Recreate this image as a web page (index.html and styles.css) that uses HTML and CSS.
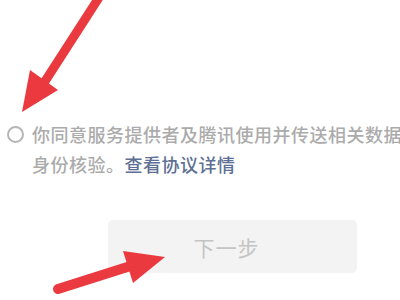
FILE: index.html
```html
<!DOCTYPE html>
<html lang="zh">
<head>
<meta charset="utf-8">
<link rel="stylesheet" href="styles.css">
</head>
<body>
<div class="page">
  <div class="agree">
    <span class="radio"></span>
    <p class="agree-text">你同意服务提供者及腾讯使用并传送相关数据<br>身份核验。<a class="link">查看协议详情</a></p>
  </div>
  <div class="actions">
    <button class="next">下一步</button>
  </div>
  <svg class="arrows" width="400" height="300" viewBox="0 0 400 300">
    <line x1="100" y1="-4" x2="42" y2="86" stroke="#ea3a40" stroke-width="9" stroke-linecap="butt"/>
    <polygon points="22,112 30,70 58,90" fill="#ea3a40"/>
    <line x1="58" y1="289" x2="140" y2="263" stroke="#ea3a40" stroke-width="10" stroke-linecap="round"/>
    <polygon points="165,257 123,251 133,283" fill="#ea3a40"/>
  </svg>
</div>
</body>
</html>
```
FILE: styles.css
```css
html, body {
  margin: 0;
  padding: 0;
  background: #ffffff;
  overflow: hidden;
}
.page {
  position: relative;
  width: 400px;
  height: 300px;
  overflow: hidden;
  font-family: "Noto Sans CJK SC", "Noto Sans", sans-serif;
}
.agree {
  display: flex;
  align-items: flex-start;
  padding-top: 119px;
  padding-left: 7px;
}
.radio {
  flex: none;
  width: 13px;
  height: 13px;
  border: 2px solid #b6b6b6;
  border-radius: 50%;
  margin-top: 7px;
}
.agree-text {
  margin: 0 0 0 8px;
  font-size: 18px;
  font-weight: 500;
  line-height: 30px;
  letter-spacing: 0.5px;
  color: #ababab;
  white-space: nowrap;
}
.link {
  color: #5d6f94;
}
.actions {
  padding-top: 41px;
  padding-left: 108px;
}
.next {
  display: block;
  width: 249px;
  height: 53px;
  border: none;
  border-radius: 5px;
  background: #f3f3f3;
  color: #c4c4c4;
  font-family: "Noto Sans CJK SC", sans-serif;
  font-size: 21px;
  letter-spacing: 1px;
  padding: 0 12px 0 0;
}
.arrows {
  position: absolute;
  left: 0;
  top: 0;
}
```
